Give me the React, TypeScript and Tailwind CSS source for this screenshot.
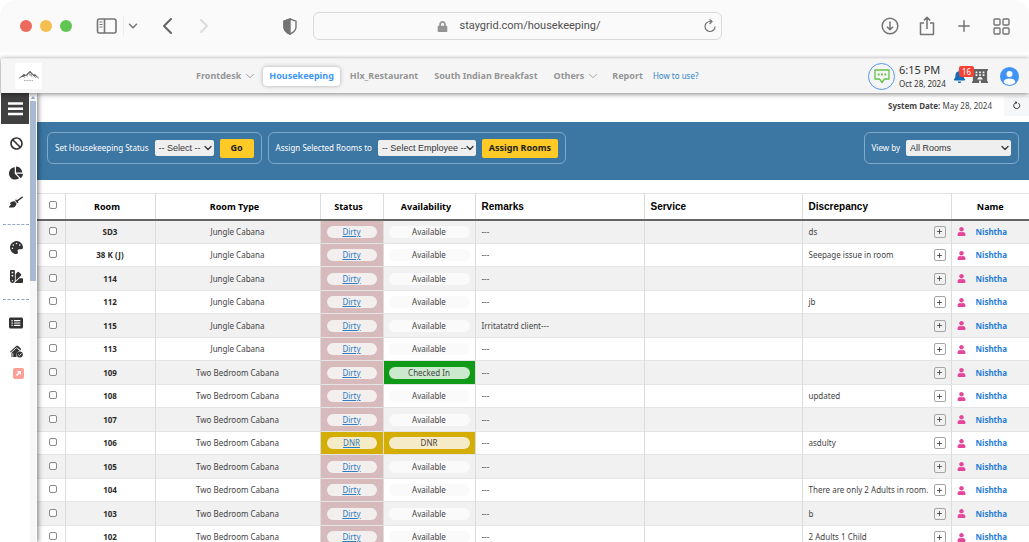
import { useState, type ReactNode } from 'react';
import { ChevronDown, Plus } from 'lucide-react';
import { FaBan, FaBell, FaBroom, FaChartPie, FaHotel, FaLock, FaPalette, FaSwatchbook, FaUser } from 'react-icons/fa';
import { FaRectangleList } from 'react-icons/fa6';
import { clsx } from 'clsx';

type Room = {
  room: string;
  type: string;
  status: 'Dirty' | 'DNR';
  availability: 'Available' | 'Checked In' | 'DNR';
  remarks: string;
  discrepancy: string;
};

const JUNGLE = 'Jungle Cabana';
const TWO_BED = 'Two Bedroom Cabana';

const ROOMS: Room[] = [
  { room: 'SD3', type: JUNGLE, status: 'Dirty', availability: 'Available', remarks: '---', discrepancy: 'ds' },
  { room: '38 K (J)', type: JUNGLE, status: 'Dirty', availability: 'Available', remarks: '---', discrepancy: 'Seepage issue in room' },
  { room: '114', type: JUNGLE, status: 'Dirty', availability: 'Available', remarks: '---', discrepancy: '' },
  { room: '112', type: JUNGLE, status: 'Dirty', availability: 'Available', remarks: '---', discrepancy: 'jb' },
  { room: '115', type: JUNGLE, status: 'Dirty', availability: 'Available', remarks: 'Irritatatrd client---', discrepancy: '' },
  { room: '113', type: JUNGLE, status: 'Dirty', availability: 'Available', remarks: '---', discrepancy: '' },
  { room: '109', type: TWO_BED, status: 'Dirty', availability: 'Checked In', remarks: '---', discrepancy: '' },
  { room: '108', type: TWO_BED, status: 'Dirty', availability: 'Available', remarks: '---', discrepancy: 'updated' },
  { room: '107', type: TWO_BED, status: 'Dirty', availability: 'Available', remarks: '---', discrepancy: '' },
  { room: '106', type: TWO_BED, status: 'DNR', availability: 'DNR', remarks: '---', discrepancy: 'asdulty' },
  { room: '105', type: TWO_BED, status: 'Dirty', availability: 'Available', remarks: '---', discrepancy: '' },
  { room: '104', type: TWO_BED, status: 'Dirty', availability: 'Available', remarks: '---', discrepancy: 'There are only 2 Adults in room.' },
  { room: '103', type: TWO_BED, status: 'Dirty', availability: 'Available', remarks: '---', discrepancy: 'b' },
  { room: '102', type: TWO_BED, status: 'Dirty', availability: 'Available', remarks: '---', discrepancy: '2 Adults 1 Child' },
];

const NAV = [
  { label: 'Frontdesk', menu: true },
  { label: 'Housekeeping', active: true },
  { label: 'Hlx_Restaurant' },
  { label: 'South Indian Breakfast' },
  { label: 'Others', menu: true },
  { label: 'Report' },
];

function BrowserBar() {
  return (
    <div className="flex h-[52px] items-center rounded-t-2xl bg-[#fafafa] pr-[18px] pl-5 text-[#747474]">
      <div className="flex gap-2">
        <span className="size-3 rounded-full bg-[#ec6a5e]" />
        <span className="size-3 rounded-full bg-[#f4bf4f]" />
        <span className="size-3 rounded-full bg-[#61c554]" />
      </div>
      <button aria-label="Sidebar" className="ml-6">
        <svg width="21" height="16" viewBox="0 0 21 16" fill="none" stroke="currentColor" strokeWidth="1.6">
          <rect x="1.500" y="1" width="18.500" height="14" rx="2" />
          <path d="M8.500 1v14" />
          <path d="M3.500 4h3M3.500 6.500h3M3.500 9h3" strokeWidth="1" />
        </svg>
      </button>
      <div className="ml-1.5 flex h-5 items-center border-l border-[#ececec] pl-0.5">
        <button aria-label="Tab groups"><ChevronDown size={14} strokeWidth={2.5} /></button>
      </div>
      <button aria-label="Back" className="ml-5">
        <svg width="16" height="16" viewBox="0 0 16 16" fill="none" stroke="#666" strokeWidth="2"><path d="M11 1L4 8l7 7" strokeLinecap="round" strokeLinejoin="round" /></svg>
      </button>
      <button aria-label="Forward" className="ml-5">
        <svg width="16" height="16" viewBox="0 0 16 16" fill="none" stroke="#dcdcdc" strokeWidth="2"><path d="M5 2l6 6-6 6" strokeLinecap="round" strokeLinejoin="round" /></svg>
      </button>
      <div className="flex flex-1 items-center justify-center gap-4">
        <svg width="14" height="17" viewBox="0 0 14 17" fill="none" stroke="currentColor" strokeWidth="1.4">
          <path d="M7 1l6 2.200V9c0 3.500-2.500 5.500-6 7-3.500-1.500-6-3.500-6-7V3.200z" />
          <path d="M7 1v15c-3.500-1.500-6-3.500-6-7V3.200z" fill="currentColor" />
        </svg>
        <div className="flex h-7 w-[409px] items-center rounded-md border border-[#dadada] px-1">
          <div className="flex flex-1 items-center justify-center gap-3 pl-4">
            <FaLock size={11} color="#949494" />
            <span className="font-[Roboto,sans-serif] text-[11px] text-[#505050]">staygrid.com/housekeeping/</span>
          </div>
          <button aria-label="Reload">
            <svg width="14" height="14" viewBox="0 0 14 14" fill="none" stroke="currentColor" strokeWidth="1.200">
              <path d="M12 7.500a5 5 0 1 1-5-5h2" />
              <path d="M6.500.500L9 2.500 6.500 5" />
            </svg>
          </button>
        </div>
      </div>
      <div className="ml-[88px] flex items-center gap-5">
        <button aria-label="Downloads">
          <svg width="18" height="18" viewBox="0 0 18 18" fill="none" stroke="currentColor" strokeWidth="1.500">
            <circle cx="9" cy="9" r="7.800" />
            <path d="M9 4.500v8M6 9.700l3 3 3-3" />
          </svg>
        </button>
        <button aria-label="Share">
          <svg width="16" height="20" viewBox="0 0 16 20" fill="none" stroke="currentColor" strokeWidth="1.500">
            <path d="M5 7H1.500v11.500h13V7H11M8 13V1.500M4.800 4.500L8 1.300l3.200 3.200" strokeLinejoin="round" />
          </svg>
        </button>
        <button aria-label="New tab"><Plus size={18} strokeWidth={2} /></button>
        <button aria-label="Tab overview">
          <svg width="18" height="17" viewBox="0 0 18 17" fill="none" stroke="currentColor" strokeWidth="1.400">
            <rect x="1" y="1" width="6" height="6" rx="1" />
            <rect x="10" y="1" width="6" height="6" rx="1" />
            <rect x="1" y="10" width="6" height="6" rx="1" />
            <rect x="10" y="10" width="6" height="6" rx="1" />
          </svg>
        </button>
      </div>
    </div>
  );
}

function Header() {
  return (
    <header className="relative z-20 mt-1.5 ml-px flex h-[35px] items-center border-t border-[#ebebeb] bg-[#f5f5f5] pr-2.5 pl-3.5 shadow-[0_1px_5px_rgba(0,0,0,0.5)]">
      <div className="grid h-[26px] w-[27px] place-items-center bg-white">
        <svg width="22" height="14" viewBox="0 0 22 14" fill="none">
          <path d="M1 9l5-4 2 1 4-4 4 4 1-1 4 4.500-4-2.500-1 .5-4-4-3 3 1 1.500-2-1.500-2 1z" fill="#555" />
          <path d="M1 9.500l5-4M8 6l4-4 3 4 2 0 4 3.500M11 4l1 2.500 1-1.500 1 3M5 7l2 1.500M16 7l2 2" stroke="#777" strokeWidth=".7" />
          <path d="M6 11.500h9" stroke="#aaa" strokeWidth="1.200" strokeDasharray="1 .6" />
        </svg>
      </div>
      <nav className="ml-[148px] flex items-center gap-1 text-[9px] font-bold text-[#959595]">
        {NAV.map(n => (
          <a
            key={n.label}
            href="#"
            className={clsx(
              'flex h-[19px] items-center gap-0.5 rounded-sm px-1.5 whitespace-nowrap',
              n.active && 'bg-white text-[#4096f7] shadow-[0_0_4px_rgba(0,0,0,0.3)]',
            )}
          >
            {n.label}
            {n.menu && <ChevronDown size={14} strokeWidth={1.5} className="-mr-1" />}
          </a>
        ))}
        <a href="#" className="text-[8px] whitespace-nowrap font-normal text-[#3284c9]">How to use?</a>
      </nav>
      <div className="ml-auto flex items-center">
        <button aria-label="Messages" className="grid size-[27px] place-items-center rounded-full border border-[#5596e8]">
          <svg width="16" height="15" viewBox="0 0 16 15" fill="none" stroke="#63c24a" strokeWidth="1.300">
            <path d="M1 1h14v9h-4.500L8 13.500 5.500 10H1z" strokeLinejoin="round" />
            <path d="M3.800 5.500h8.400" strokeWidth="1.800" strokeDasharray="1.800 1.500" />
          </svg>
        </button>
        <div className="ml-1 w-11 leading-none whitespace-nowrap text-[#333]">
          <div className="text-[11px] leading-4">6:15 PM</div>
          <div className="text-[8px] leading-3">Oct 28, 2024</div>
        </div>
        <button aria-label="Notifications" className="relative ml-2.5">
          <FaBell size={13} color="#0f6cb8" />
          <span className="absolute -top-1 left-1.5 rounded-xs bg-[#f44336] px-[3px] text-[8px] leading-[11px] text-white">16</span>
        </button>
        <FaHotel size={16} color="#626262" className="ml-1.5" />
        <button aria-label="Account" className="ml-3">
          <svg width="19" height="19" viewBox="0 0 19 19">
            <circle cx="9.500" cy="9.500" r="9.500" fill="#3f94f5" />
            <circle cx="9.500" cy="7" r="3" fill="#fff" />
            <path d="M3.500 15.200C4 12.500 6.500 11.500 9.500 11.500s5.500 1 6 3.700a8 8 0 0 1-12 0z" fill="#fff" />
          </svg>
        </button>
      </div>
    </header>
  );
}

function SideIcon({ label, children }: { label: string; children: ReactNode }) {
  return <button aria-label={label} className="grid h-[29px] w-full place-items-center pl-0.5">{children}</button>;
}

function Sidebar() {
  return (
    <aside className="relative z-10 flex w-[37px] shrink-0 bg-white pl-px text-[#333] shadow-[1px_0_5px_rgba(0,0,0,0.55)]">
      <div className="w-7">
        <button aria-label="Menu" className="grid h-[31px] w-full place-items-center bg-[#404040]">
          <svg width="15" height="14" viewBox="0 0 15 14" stroke="#fff" strokeWidth="2.400">
            <path d="M0 1.500h15M0 6.700h15M0 12h15" />
          </svg>
        </button>
        <div className="pt-[5px]">
          <SideIcon label="Block rooms"><FaBan size={13} /></SideIcon>
          <SideIcon label="Statistics"><FaChartPie size={14} /></SideIcon>
          <SideIcon label="Housekeeping"><FaBroom size={14} /></SideIcon>
        </div>
        <div className="mt-2 ml-0.5 border-t border-dashed border-[#8fa5c5]" />
        <div className="pt-2">
          <SideIcon label="Theme"><FaPalette size={13} /></SideIcon>
          <SideIcon label="Swatches"><FaSwatchbook size={13} /></SideIcon>
        </div>
        <div className="mt-2 ml-0.5 border-t border-dashed border-[#8fa5c5]" />
        <div className="pt-2">
          <SideIcon label="List"><FaRectangleList size={14} /></SideIcon>
          <SideIcon label="House status">
            <svg width="13" height="13" viewBox="0 0 13 13" fill="#333">
              <path d="M0 6.800L6.500.800h1.300l3 2.800v2L6.500 2.200.700 7.500z" />
              <path d="M1.500 7.800l5-4.700 3.300 2.800C7.500 6.300 6.300 8 6.500 10.300V12h-5z" />
              <path d="M2.800 12V8" stroke="#fff" strokeWidth=".7" />
              <circle cx="9.800" cy="9.500" r="3" />
              <path d="M8.300 9.500l1.200 1.200 2-2.300" fill="none" stroke="#fff" strokeWidth=".8" />
            </svg>
          </SideIcon>
          <button aria-label="Open" className="mt-0.5 ml-3 grid size-[11px] place-items-center rounded-xs bg-[#faa094]">
            <svg width="7" height="7" viewBox="0 0 7 7" fill="#fff" stroke="#fff">
              <path d="M1.500 5.500L5 2" strokeWidth="1.600" />
              <path d="M2 1h4v4z" stroke="none" />
            </svg>
          </button>
        </div>
      </div>
      <div className="ml-px w-[6px] bg-[#f6f7f9]">
        <div className="grid h-2 place-items-center">
          <svg width="4" height="3" viewBox="0 0 4 3" fill="#97a7c4"><path d="M2 0l2 3H0z" /></svg>
        </div>
        <div className="h-[180px] bg-[#a9b8d3]" />
      </div>
    </aside>
  );
}

function Picker({ id, value, className }: { id: string; value: string; className: string }) {
  return (
    <div className="relative flex items-center">
      <select
        id={id}
        className={clsx("h-4 appearance-none rounded-xs bg-[#efefef] pl-1 font-['Liberation_Sans',Arial,sans-serif] text-[9px] leading-4 text-[#333]", className)}
      >
        <option>{value}</option>
      </select>
      <ChevronDown size={12} strokeWidth={2.5} color="#333" className="pointer-events-none absolute right-0" />
    </div>
  );
}

function Toolbar() {
  const box = 'flex h-8 items-center rounded-md border border-[#80aacb] px-[7px] text-[8px] text-white whitespace-nowrap';
  const go = 'h-[19px] rounded-xs bg-[#ffc926] text-[9px] font-bold text-[#222]';
  return (
    <div className="flex h-[58px] items-start gap-1.5 bg-[#3c76a3] px-2.5 pt-2.5">
      <div className={box}>
        <label htmlFor="hk-status">Set Housekeeping Status</label>
        <div className="ml-1.5"><Picker id="hk-status" value="-- Select --" className="w-[59px]" /></div>
        <button className={clsx(go, 'ml-1.5 w-[34px]')}>Go</button>
      </div>
      <div className={box}>
        <label htmlFor="employee">Assign Selected Rooms to</label>
        <div className="ml-1.5"><Picker id="employee" value="-- Select Employee --" className="w-[98px]" /></div>
        <button className={clsx(go, 'ml-1.5 w-[76px]')}>Assign Rooms</button>
      </div>
      <div className={clsx(box, 'ml-auto')}>
        <label htmlFor="view-by">View by</label>
        <div className="ml-1.5"><Picker id="view-by" value="All Rooms" className="w-[105px]" /></div>
      </div>
    </div>
  );
}

function Check({ label }: { label: string }) {
  return (
    <input
      type="checkbox"
      aria-label={label}
      className="ml-1 block size-2 appearance-none rounded-xs border border-[#8a8a8a] bg-white checked:bg-[#4096f7]"
    />
  );
}

function RoomRow({ r }: { r: Room }) {
  const cell = 'border-r border-[#dcdcdc] p-0';
  return (
    <tr className="h-[23px] border-b border-[#e4e4e4] odd:h-6 odd:bg-[#f1f1f1]">
      <td className={clsx(cell, 'pb-0.5 pl-2')}><Check label={`Select room ${r.room}`} /></td>
      <td className={clsx(cell, 'text-center font-bold text-[#2b2b2b]')}>{r.room}</td>
      <td className={clsx(cell, 'text-center')}>{r.type}</td>
      <td className={clsx(cell, 'px-1.5', r.status === 'DNR' ? 'bg-[#d5ae05]' : 'bg-[#d7babb]')}>
        <a
          href="#"
          className={clsx('block h-3 rounded-full text-center leading-3 text-[#2f7cc0] underline', r.status === 'DNR' ? 'bg-[#f6ebc8]' : 'bg-[#f3efef]')}
        >
          {r.status}
        </a>
      </td>
      <td
        className={clsx(
          cell,
          'px-[5px]',
          r.availability === 'Checked In' && 'bg-[#119a17]',
          r.availability === 'DNR' && 'bg-[#d5ae05]',
        )}
      >
        <span
          className={clsx(
            'block h-3 rounded-full text-center leading-3',
            r.availability === 'Available' && 'bg-[#fafafa]',
            r.availability === 'Checked In' && 'bg-[#cbe9cd]',
            r.availability === 'DNR' && 'bg-[#f6ebc8]',
          )}
        >
          {r.availability}
        </span>
      </td>
      <td className={clsx(cell, 'pl-1.5')}>{r.remarks}</td>
      <td className={cell} />
      <td className={clsx(cell, 'pr-[5px] pl-1.5')}>
        <div className="flex items-center justify-between whitespace-nowrap">
          <span>{r.discrepancy}</span>
          <button aria-label="Add discrepancy" className="grid size-3 shrink-0 place-items-center rounded-xs border border-[#a5a5a5]">
            <Plus size={7} strokeWidth={3} />
          </button>
        </div>
      </td>
      <td className="p-0 pl-[5px]">
        <div className="flex items-center gap-2.5">
          <FaUser size={9} color="#e5459a" />
          <a href="#" className="font-bold text-[#1f7dd8]">Nishtha</a>
        </div>
      </td>
    </tr>
  );
}

function RoomTable() {
  const head = 'border-r border-[#dcdcdc] p-0 font-bold';
  const plain = "pl-1.5 text-left font-['Liberation_Sans',Arial,sans-serif] text-[10px]";
  return (
    <table className="mt-[13px] w-full table-fixed border-collapse text-[8px] text-[#444]">
      <thead>
        <tr className="h-[26px] border-t border-b-2 border-t-[#e4e4e4] border-b-[#666] text-[9px] text-black">
          <th className={clsx(head, 'w-7 pb-0.5 pl-2')}><Check label="Select all rooms" /></th>
          <th className={clsx(head, 'w-[90px] pr-1.5')}>Room</th>
          <th className={clsx(head, 'w-[165px] pr-1.5')}>Room Type</th>
          <th className={clsx(head, 'w-[63px] pr-1.5')}>Status</th>
          <th className={clsx(head, 'w-[92px] pr-1.5')}>Availability</th>
          <th className={clsx(head, plain)}>Remarks</th>
          <th className={clsx(head, plain, 'w-[158px]')}>Service</th>
          <th className={clsx(head, plain, 'w-[149px]')}>Discrepancy</th>
          <th className="w-[78px] p-0 font-bold">Name</th>
        </tr>
      </thead>
      <tbody>
        {ROOMS.map(r => <RoomRow key={r.room} r={r} />)}
      </tbody>
    </table>
  );
}

export default function App() {
  const [spinning, setSpinning] = useState(false);

  return (
    <div className="flex h-screen flex-col overflow-hidden bg-white font-['Noto_Sans','Open_Sans',sans-serif]">
      <BrowserBar />
      <Header />
      <div className="flex min-h-0 flex-1">
        <Sidebar />
        <main className="min-w-0 flex-1">
          <div className="flex h-[29px] items-center justify-end gap-3 pb-1 text-[8px] text-[#444]">
            <p><b>System Date:</b> May 28, 2024</p>
            <button
              aria-label="Refresh"
              className="grid h-5 w-[25px] place-items-center bg-[#f6f7f8]"
              onClick={() => setSpinning(s => !s)}
            >
              <svg width="9" height="9" viewBox="0 0 9 9" fill="none" stroke="#333" className={clsx(spinning && 'animate-spin')}>
                <path d="M6.500 2.200A3 3 0 1 1 4 1.700" />
                <path d="M3.500 0l2 1.700-2 1.600z" fill="#333" stroke="none" />
              </svg>
            </button>
          </div>
          <Toolbar />
          <RoomTable />
        </main>
      </div>
    </div>
  );
}
